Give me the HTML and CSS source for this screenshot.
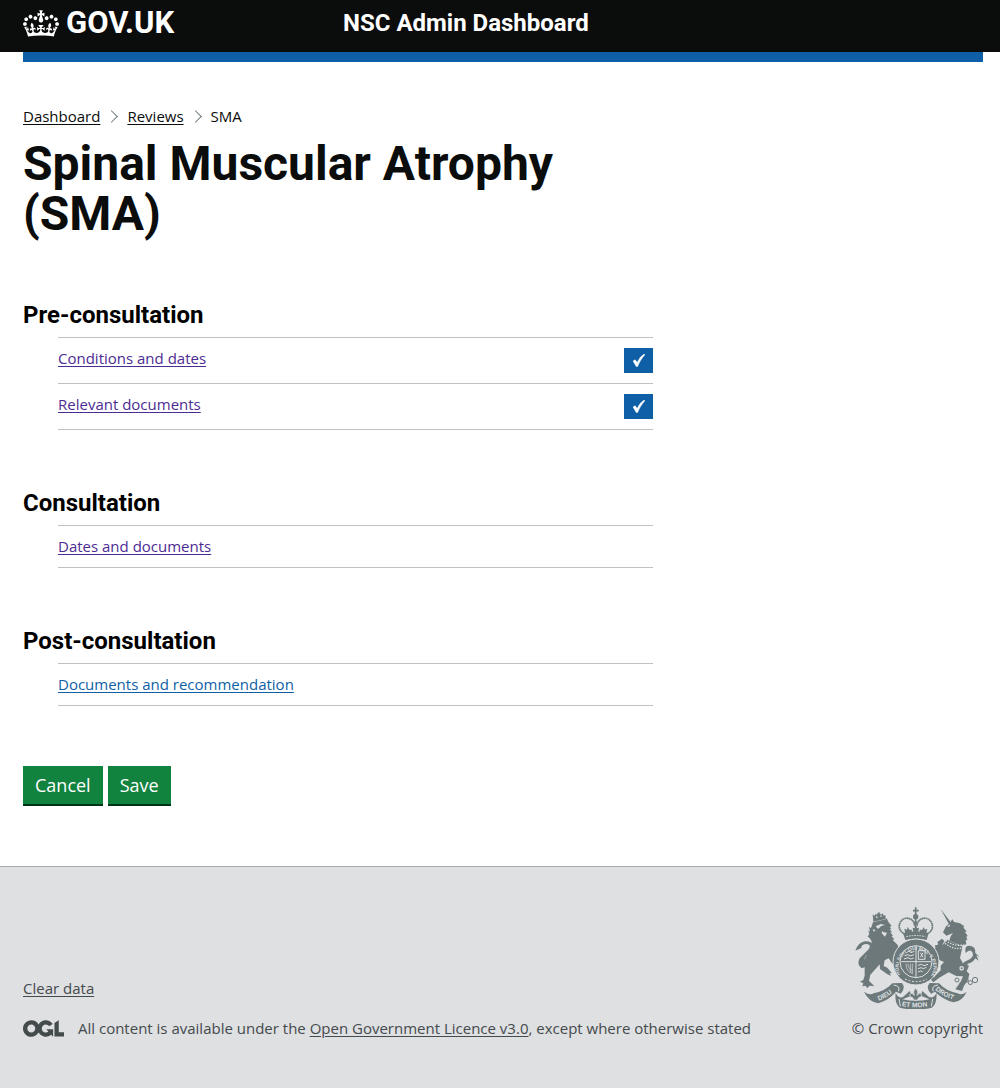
FILE: index.html
```html
<!DOCTYPE html>
<html lang="en">
<head>
<meta charset="utf-8">
<meta name="viewport" content="width=device-width, initial-scale=1">
<title>Spinal Muscular Atrophy (SMA) - NSC Admin Dashboard</title>
<link rel="stylesheet" href="styles.css">
</head>
<body>
<header class="header">
  <div class="header-inner">
    <a class="logo" href="#">
      <svg class="crown" viewBox="0 0 132 97" aria-hidden="true"><path fill="currentColor" fill-rule="evenodd" d="M25 30.2c3.5 1.5 7.7-.2 9.1-3.7 1.5-3.6-.2-7.8-3.9-9.2-3.6-1.4-7.6.3-9.1 3.9-1.4 3.5.3 7.5 3.9 9zM9 39.5c3.6 1.5 7.8-.2 9.2-3.7 1.5-3.6-.2-7.8-3.9-9.1-3.6-1.5-7.6.2-9.1 3.8-1.4 3.5.3 7.5 3.8 9zM4.4 57.2c3.5 1.5 7.7-.2 9.1-3.8 1.5-3.6-.2-7.7-3.9-9.1-3.5-1.5-7.6.3-9.1 3.8-1.4 3.5.3 7.6 3.9 9.1zm38.3-21.4c3.5 1.5 7.7-.2 9.1-3.8 1.5-3.6-.2-7.7-3.9-9.1-3.6-1.5-7.6.3-9.1 3.8-1.3 3.6.4 7.7 3.9 9.1zm64.4-5.6c-3.6 1.5-7.8-.2-9.1-3.7-1.5-3.6.2-7.8 3.8-9.2 3.6-1.4 7.7.3 9.2 3.9 1.3 3.5-.4 7.5-3.9 9zm15.9 9.3c-3.6 1.5-7.7-.2-9.1-3.7-1.5-3.6.2-7.8 3.7-9.1 3.6-1.5 7.7.2 9.2 3.8 1.5 3.5-.3 7.5-3.8 9zm4.7 17.7c-3.6 1.5-7.8-.2-9.2-3.8-1.5-3.6.2-7.7 3.9-9.1 3.6-1.5 7.7.3 9.2 3.8 1.3 3.5-.4 7.6-3.9 9.1zM89.3 35.8c-3.6 1.5-7.8-.2-9.2-3.8-1.4-3.6.2-7.7 3.9-9.1 3.6-1.5 7.7.3 9.2 3.8 1.4 3.6-.3 7.7-3.9 9.1zM69.7 17.7l8.9 4.7V9.3l-8.9 2.8c-.2-.3-.5-.6-.9-.9L72.4 0H59.6l3.5 11.2c-.3.3-.6.5-.9.9l-8.8-2.8v13.1l8.8-4.7c.3.3.6.7.9.9l-5 15.4v.1c-.2.8-.4 1.6-.4 2.4 0 4.1 3.1 7.5 7 8.1h.2c.3 0 .7.1 1 .1.4 0 .7 0 1-.1h.2c4-.6 7.1-4.1 7.1-8.1 0-.8-.1-1.7-.4-2.4V34l-5.1-15.4c.4-.2.7-.6 1-.9zM66 92.8c16.9 0 32.8 1.1 47.1 3.2 4-16.9 8.9-26.7 14-33.5l-9.6-3.4c1 4.9 1.1 7.2 0 10.2-1.5-1.4-3-4.3-4.2-8.7L108.6 76c2.8-2 5-3.2 7.5-3.3-4.4 9.4-10 11.9-13.6 11.2-4.3-.8-6.3-4.6-5.6-7.9 1-4.7 5.7-5.9 8-.5 4.3-8.7-3-11.4-7.6-8.8 7.1-7.2 7.9-13.5 2.1-21.1-8 6.1-8.1 12.3-4.5 20.8-4.7-5.4-12.1-2.5-9.5 6.2 3.4-5.2 7.9-2 7.2 3.1-.6 4.3-6.4 7.8-13.5 7.2-10.3-.9-10.9-8-11.2-13.8 2.5-.5 7.1 1.8 11 7.3L80.2 60c-4.1 4.4-8 5.3-12.3 5.4 1.4-4.4 8-11.6 8-11.6H55.5s6.4 7.2 7.9 11.6c-4.2-.1-8-1-12.3-5.4l1.4 16.4c3.9-5.5 8.5-7.7 10.9-7.3-.3 5.8-.9 12.8-11.1 13.8-7.2.6-12.9-2.9-13.5-7.2-.7-5 3.8-8.3 7.1-3.1 2.7-8.7-4.6-11.6-9.4-6.2 3.7-8.5 3.6-14.7-4.6-20.8-5.8 7.6-5 13.9 2.2 21.1-4.7-2.6-11.9.1-7.7 8.8 2.3-5.5 7.1-4.2 8.1.5.7 3.3-1.3 7.1-5.7 7.9-3.5.7-9-1.8-13.5-11.2 2.5.1 4.7 1.3 7.5 3.3l-4.7-15.4c-1.2 4.4-2.7 7.2-4.3 8.7-1.1-3-.9-5.3 0-10.2l-9.5 3.4c5 6.9 9.9 16.7 14 33.5 14.8-2.1 30.8-3.2 47.7-3.2z"/></svg>
      <span>GOV.UK</span>
    </a>
    <a class="service-name" href="#">NSC Admin Dashboard</a>
  </div>
</header>

<div class="container">
  <div class="accent-bar"></div>
  <nav aria-label="Breadcrumb">
    <ol class="breadcrumbs">
      <li><a href="#">Dashboard</a></li>
      <li><a href="#">Reviews</a></li>
      <li>SMA</li>
    </ol>
  </nav>
  <main class="columns">
    <form class="main-column">
      <h1>Spinal Muscular Atrophy (SMA)</h1>

      <section class="task-section">
        <h2>Pre-consultation</h2>
        <ul class="task-list">
          <li><a class="visited" href="#">Conditions and dates</a>
            <span class="tag" role="img" aria-label="Completed"><svg viewBox="0 0 12 13" aria-hidden="true"><path fill="currentColor" stroke="currentColor" stroke-width=".5" d="M0 7 2.200 5.800 4.200 8.600C6 4.800 8 2 11 .300l1 .300C8.800 4 6.500 8 4.600 12.500H3.300Z"/></svg></span></li>
          <li><a class="visited" href="#">Relevant documents</a>
            <span class="tag" role="img" aria-label="Completed"><svg viewBox="0 0 12 13" aria-hidden="true"><path fill="currentColor" stroke="currentColor" stroke-width=".5" d="M0 7 2.200 5.800 4.200 8.600C6 4.800 8 2 11 .300l1 .300C8.800 4 6.500 8 4.600 12.500H3.300Z"/></svg></span></li>
        </ul>
      </section>

      <section class="task-section">
        <h2>Consultation</h2>
        <ul class="task-list">
          <li><a class="visited" href="#">Dates and documents</a></li>
        </ul>
      </section>

      <section class="task-section">
        <h2>Post-consultation</h2>
        <ul class="task-list">
          <li><a href="#">Documents and recommendation</a></li>
        </ul>
      </section>

      <div class="button-group">
        <button type="button">Cancel</button>
        <button type="button">Save</button>
      </div>
    </form>
  </main>
</div>

<footer class="footer">
  <div class="footer-inner">
    <div class="footer-meta">
      <a href="#">Clear data</a>
      <div class="licence">
        <svg class="ogl" viewBox="0 0 483.2 195.7" aria-hidden="true"><path fill="currentColor" d="M421.5 142.8V.1l-50.7 32.3v161.1h112.400v-50.7zm-122.3-9.6A47.12 47.12 0 0 1 221 97.8c0-26 21.1-47.1 47.1-47.1 16.7 0 31.4 8.7 39.7 21.8l42.7-27.2A97.63 97.63 0 0 0 268.1 0c-36.5 0-68.3 20.1-85.1 49.700A98 98 0 0 0 97.8 0C43.9 0 0 43.9 0 97.8s43.9 97.8 97.8 97.8c36.5 0 68.3-20.1 85.1-49.7a97.76 97.76 0 0 0 149.6 25.4l19.4 22.2h3v-87.8h-80l24.3 27.5zM97.8 145c-26 0-47.1-21.1-47.1-47.1s21.1-47.1 47.1-47.1 47.1 21.1 47.1 47.1S123.8 145 97.8 145"/></svg>
        <span>All content is available under the <a href="#">Open Government Licence v3.0</a>, except where otherwise stated</span>
      </div>
    </div>
    <a class="copyright" href="#">
      <svg class="crest" viewBox="30 20 375 306" aria-hidden="true">
        <defs>
          <path id="garter" d="M166 223A52 52 0 1 1 260 223"/>
          <path id="ribbon-left" d="M101 301Q130 291 153 267"/>
          <path id="ribbon-mid" d="M170 317Q212 325 258 316"/>
          <path id="ribbon-right" d="M270 268Q294 290 334 301"/>
        </defs>
        <!-- lion -->
        <g fill="#6c787a">
          <path d="M83 42l5 5 4-7 5 5 5-8 5 7 6-5 3 7 5-2 1 12-37 8zM96 39h4v-3h4v4h3v3H96z"/>
          <path d="M84 66l38-9 3-3 5 10 5 7 5 5-5 3 4 8-5-1 7 10-5 0 8 11-5 1 9 8-5 3 15 15 6 24-12 7 12 25-10 9-13-10-10-15-12 6-3 17 11 5 14 17-7-1 4 9-12-6-21-15-1-14-13 15-15 16-4 18 7 8 9 9-14-2-7 7-6-7-9 2 3-9-10-5 10-5 4-13 0-26-8-4 4-15 18-28 10-17-4-15-5-8-6-4 5-8-3-10 5 2-3-13 6 3z"/>
          <path d="M50 204Q34 192 44 174L71 147Q80 132 65 131 48 132 49 143L31 151Q39 127 60 123 82 122 87 139 86 153 63 166 50 184 63 199z"/>
          <path d="M131 139l20 6 4 11-12 2 9 11-15-6-15 10-14-1 6-8-12-3 14-7-5-9 15 4z"/>
        </g>
        <path fill="#dee0e2" d="M92 78l16-7 12 3-11 3-10 9zM112 92l4 4 10 1-6 12-10-10zM83 86l9 4-6 4zM92 52l3-6 4 6zm13-2 3-6 4 4z"/>
        <!-- royal crown -->
        <g fill="none" stroke="#6c787a" stroke-width="5">
          <path d="M180 101Q158 91 164 70 172 51 190 54 208 58 209 78M245 101Q267 91 261 70 253 51 235 54 217 58 216 78" stroke-dasharray="5 1"/>
          <path d="M212 45v49M204 31h17M212 21v23"/>
        </g>
        <g fill="#6c787a">
          <circle cx="212" cy="49" r="8"/><circle cx="212" cy="68" r="5"/>
          <path d="M174 98Q212 88 251 98l-6 21Q212 111 181 119z"/>
          <path d="M181 98l-3-13 8 3 2-8 6 9 7-1-2 12zM244 98l3-13-8 3-2-8-6 9-7-1 2 12zM205 94l-2-12 6 2 3-9 4 9 6-2-2 12z"/>
        </g>
        <path d="M184 109Q212 102 241 109" fill="none" stroke="#dee0e2" stroke-width="3" stroke-dasharray="5 3"/>
        <!-- unicorn -->
        <g fill="#6c787a">
          <path d="M287 26l32 42-7 4z"/>
          <path d="M315 67l7-10 5 8 18 4 13 9-3 4 10 11-5 2 8 12-4 2 3 10-5 1 2 12-16 4-35-15 4-13 7-10-20 8-10-10 9-18z"/>
          <path d="M306 118l46 21-3 15-4 19 10 18 17 5-7 17 8 8-4 18-12 17-6 16-20-5 16-23 7-16-20-1-23-11-28 16-18 14-9-10 17-12 14-14 0-14 10-11-21-9-13-18 12-7-6-15 14-5 10 3z"/>
          <path d="M353 198Q350 187 365 181 390 172 382 155 374 144 362 158 357 132 377 137 392 139 391 158L404 170 394 165 401 181 391 174Q383 189 368 190L366 202z"/>
          <path d="M277 125l14-10 7 7-6 11 16 3-9 7 9 6-22-2zM270 142l14 12-5 10-19-11z"/>
        </g>
        <g fill="none" stroke="#dee0e2" stroke-width="4">
          <path d="M302 120Q326 140 356 133M300 129Q326 149 350 143" stroke-dasharray="4 4"/>
          <circle cx="357" cy="174" r="5"/><circle cx="350" cy="204" r="5"/><path d="M308 78l7-3"/>
        </g>
        <g fill="none" stroke="#6c787a" stroke-width="3">
          <circle cx="336" cy="239" r="6"/><circle cx="350" cy="252" r="6"/><circle cx="364" cy="240" r="6"/><circle cx="376" cy="247" r="6"/><circle cx="390" cy="239" r="8"/>
        </g>
        <!-- garter and shield -->
        <circle cx="213" cy="185" r="69" fill="#6c787a" stroke="#dee0e2" stroke-width="3"/>
        <circle cx="213" cy="184" r="48" fill="#6c787a" stroke="#dee0e2" stroke-width="3"/>
        <path d="M213 138v92M168 184h90" stroke="#dee0e2" stroke-width="3"/>
        <g fill="none" stroke="#dee0e2" stroke-width="3">
          <path d="M184 157l8-5 6 5 10-4M179 166l10-3 6 4 12-4M177 176l12-4 8 4 9-3"/>
          <path d="M220 151h20v26h-20zM226 157l8 14m0-14-8 14M219 195l10-3 8 4 12-4M219 205l9-3 7 3 9-4M219 215l8-3 6 2"/>
          <path d="M183 190q0 25 20 29M189 190q0 17 14 21M196 190v26M202 190v30" stroke-width="2"/>
          <path d="M180 236Q213 252 246 236" stroke-dasharray="6 5"/>
        </g>
        <text class="motto" fill="#dee0e2"><textPath href="#garter">HONI SOIT QUI MAL Y PENSE</textPath></text>
        <!-- motto ribbon -->
        <g fill="#6c787a">
          <path d="M57 274Q74 286 86 279 120 273 142 249L171 248Q183 263 167 280L153 274Q135 297 100 309 71 304 57 274z"/>
          <path d="M365 274Q350 286 338 279 304 273 282 249L254 248Q241 263 258 280L270 274Q292 297 326 306 353 302 365 274z"/>
          <path d="M152 277Q160 296 174 290L194 272 200 286 172 297Q212 306 254 297L227 286 232 272 252 290Q266 296 275 277 276 313 260 322 212 334 165 322 148 311 152 277z"/>
        </g>
        <path d="M146 254Q168 257 160 273M279 254Q257 257 265 273M162 296L166 318M263 296L259 318" fill="none" stroke="#dee0e2" stroke-width="3"/>
        <path fill="#6c787a" stroke="#dee0e2" stroke-width="2" d="M212 263q10 11 4 22 8-10 14-3 2 8-9 10l-4 7h-10l-4-7q-11-2-9-10 6-7 14 3-6-11 4-22z"/>
        <g class="ribbon-text" fill="#dee0e2">
          <text><textPath href="#ribbon-left">DIEU</textPath></text>
          <text><textPath href="#ribbon-mid">ET MON</textPath></text>
          <text><textPath href="#ribbon-right">DROIT</textPath></text>
        </g>
      </svg>
      <span>© Crown copyright</span>
    </a>
  </div>
</footer>
</body>
</html>
```
FILE: styles.css
```css
* { box-sizing: border-box; }

body {
  margin: 0;
  min-height: 100vh;
  display: flex;
  flex-direction: column;
  background: #fff;
  color: #0b0c0c;
  font-family: "Open Sans", "Noto Sans", sans-serif;
  font-size: 15px;
  line-height: 20px;
}

a { color: inherit; text-underline-offset: 2px; }

.header { background: #0b0c0c; color: #fff; }

.header-inner {
  display: grid;
  grid-template-columns: 1fr 2fr;
  align-items: center;
  height: 52px;
  padding: 0 17px 6px 23px;
}

.header a { text-decoration: none; }

.logo,
.service-name,
h1,
h2 { font-family: Roboto, "Liberation Sans", sans-serif; }

.logo {
  display: flex;
  align-items: center;
  gap: 7px;
  font-size: 31px;
  line-height: 30px;
  font-weight: 700;
}

.crown { width: 36px; height: 27px; }

.service-name { font-size: 24px; line-height: 30px; font-weight: 700; }

.container { padding: 0 17px 60px 23px; }

.accent-bar { height: 10px; background: #0f5fa6; }

.breadcrumbs {
  display: flex;
  margin: 44px 0 13px;
  padding: 0;
  list-style: none;
}

.breadcrumbs li { display: flex; align-items: center; }

.breadcrumbs li + li::before {
  content: "";
  width: 8px;
  height: 8px;
  margin: 0 11px 0 7px;
  border: solid #6c787a;
  border-width: 1px 1px 0 0;
  transform: rotate(45deg);
}

.columns {
  display: grid;
  grid-template-columns: 2fr 1fr;
  column-gap: 15px;
}

h1 {
  margin: 0 0 61px;
  font-size: 48px;
  line-height: 50px;
}

.task-section + .task-section { margin-top: 58px; }

h2 {
  margin: 0 0 7px;
  color: #000;
  font-size: 24px;
  line-height: 30px;
}

.task-list {
  margin: 0 0 0 35px;
  padding: 0;
  list-style: none;
  border-top: 1px solid #bfc1c3;
}

.task-list li {
  display: flex;
  justify-content: space-between;
  align-items: flex-start;
  min-height: 42px;
  padding: 10px 0;
  border-bottom: 1px solid #bfc1c3;
}

.task-list a { color: #0f5fa6; }
.task-list .visited { color: #4c2c92; }

.tag {
  display: flex;
  align-items: center;
  justify-content: center;
  width: 29px;
  height: 25px;
  background: #0f5fa6;
  color: #fff;
}

.tag svg { width: 12px; height: 13px; }

.button-group { display: flex; gap: 5px; margin-top: 60px; }

button {
  height: 40px;
  padding: 0 12px;
  border: 0;
  border-bottom: 2px solid #003418;
  background: #12823f;
  color: #fff;
  font: inherit;
  font-size: 18px;
}

.footer {
  flex: 1;
  padding: 40px 17px 50px 23px;
  border-top: 1px solid #a1acb2;
  background: #dee0e2;
  color: #454a4d;
}

.footer-inner {
  display: flex;
  justify-content: space-between;
  align-items: flex-end;
}

.footer-meta { display: grid; gap: 20px; }

.licence { display: flex; align-items: center; gap: 14px; }

.ogl { width: 41px; height: 17px; }

.copyright {
  display: grid;
  justify-items: center;
  gap: 9px;
  text-decoration: none;
}

.crest { width: 125px; height: 102px; }

.motto { font: bold 15px "Liberation Sans", sans-serif; }
.ribbon-text { font: bold 20px "Liberation Sans", sans-serif; }
```
